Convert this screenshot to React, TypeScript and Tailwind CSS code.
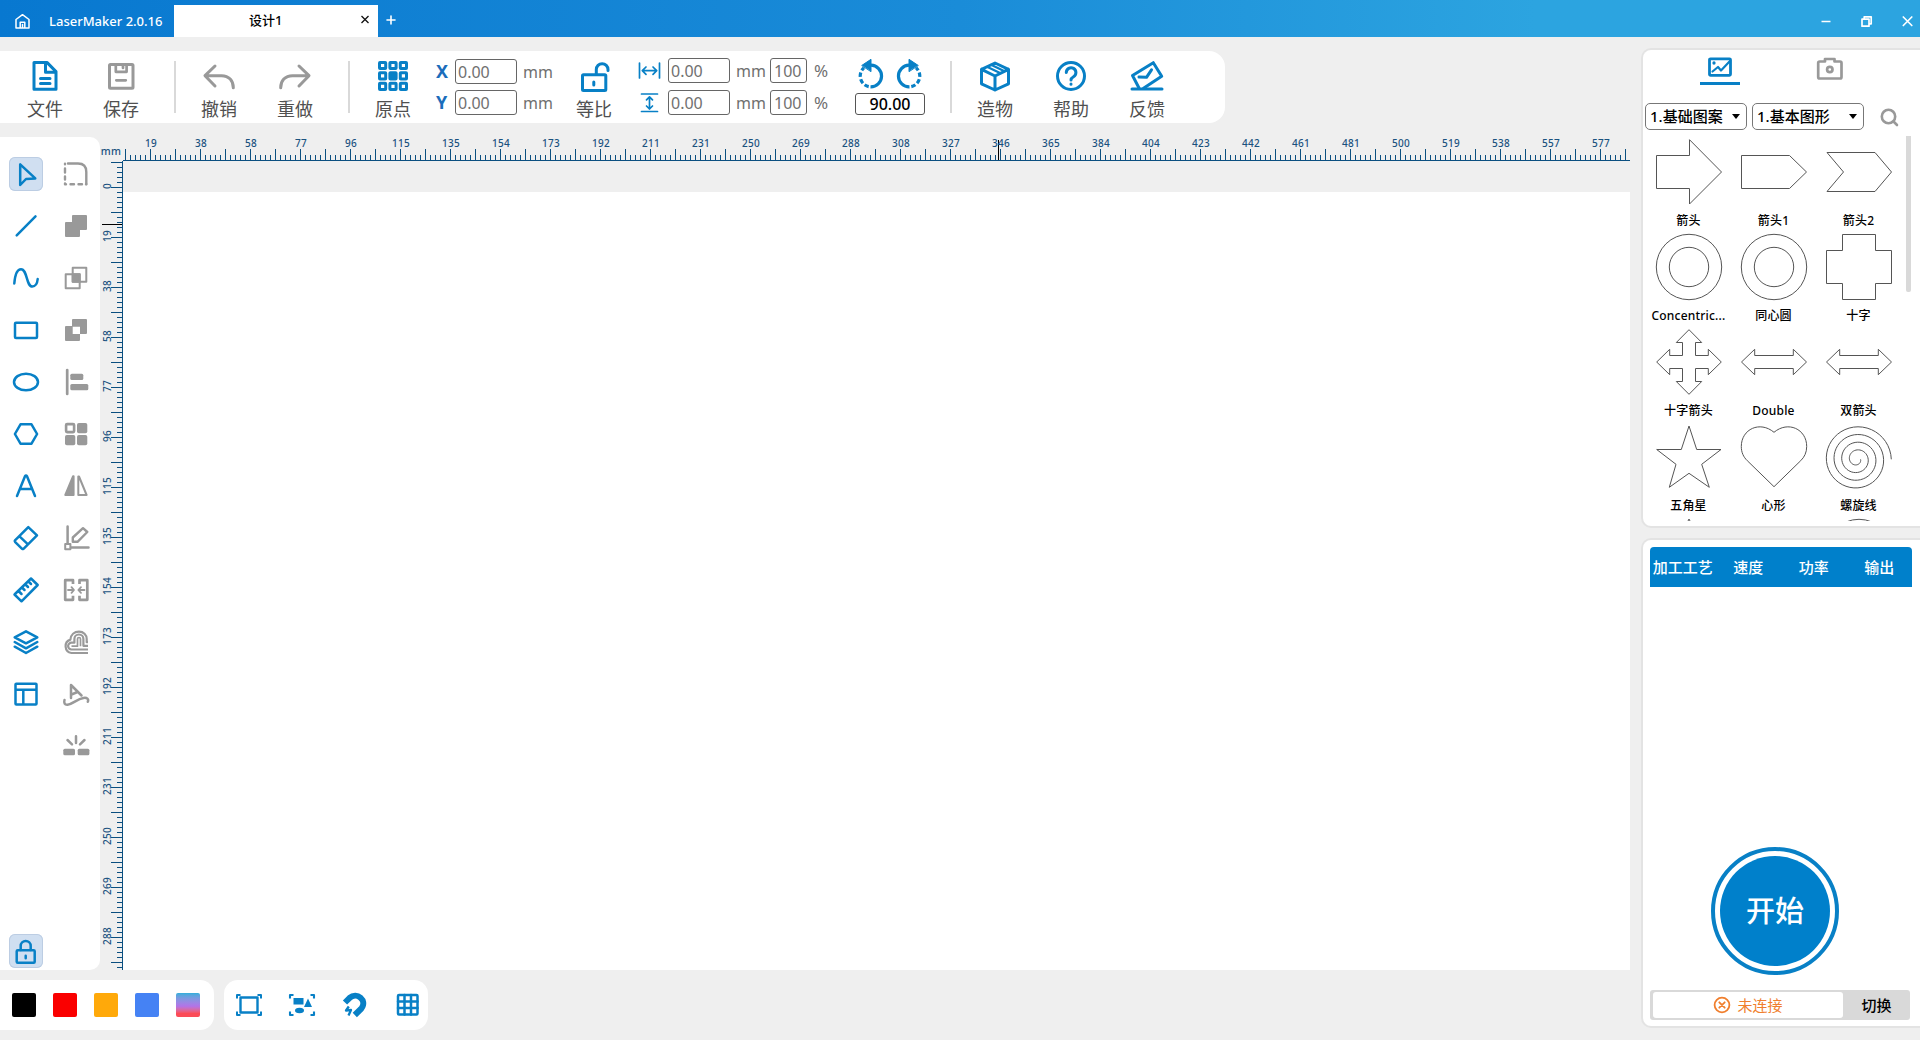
import type { ReactNode } from 'react';

const BLUE = '#0880c6';
const GRAY = '#999999';

const RULER_LABELS = [
  0, 19, 38, 58, 77, 96, 115, 135, 154, 173, 192, 211, 231, 250, 269, 288, 308, 327, 346, 365, 384, 404, 423, 442, 461,
  481, 500, 519, 538, 557, 577
];

function Icon({
  children,
  color = BLUE,
  width = 2,
  w = 34,
  h = 34
}: {
  children: ReactNode;
  color?: string;
  width?: number;
  w?: number;
  h?: number;
}) {
  return (
    <svg
      className="block shrink-0"
      width={w}
      height={h}
      viewBox={`0 0 ${w} ${h}`}
      fill="none"
      stroke={color}
      strokeWidth={width}
      strokeLinecap="round"
      strokeLinejoin="round"
    >
      {children}
    </svg>
  );
}

function TitleBar() {
  return (
    <header className="flex h-[37px] shrink-0 bg-linear-to-r from-[#0878d0] via-[#1a8cd8] via-50% to-[#2ca4e0] to-80% text-white">
      <div className="flex w-[174px] items-center pt-1.5 pl-3.5">
        <Icon w={17} h={17} color="#fff" width={1.5}>
          <path d="M2 6.5 8.5 1.7 15 6.5V15H2zM6.2 15V9.3h4.6V15M8.5 11.5V15" />
        </Icon>
        <span className="ml-[18px] text-[13px] font-medium whitespace-nowrap">LaserMaker 2.0.16</span>
      </div>
      <div className="mt-[5px] flex w-[204px] items-center bg-white text-black">
        <span className="ml-[75px] w-[109px] text-[13px] font-medium">设计1</span>
        <Icon w={14} h={14} color="#111" width={1.3}>
          <path d="m3.5 2 7 7m0-7-7 7" strokeLinecap="butt" />
        </Icon>
      </div>
      <div className="flex w-[26px] items-center justify-center pt-[3px]">
        <Icon w={10} h={10} color="#fff" width={1.6}>
          <path d="M1 5h8M5 1v8" />
        </Icon>
      </div>
      <div className="ml-auto flex items-center gap-7 pt-1.5 pr-1.5">
        <Icon w={13} h={13} color="#fff" width={1.5}>
          <path d="M2.5 6.5h9" strokeLinecap="butt" />
        </Icon>
        <Icon w={13} h={13} color="#fff" width={1.7}>
          <path d="M2 4.2h7v7H2zM4.2 4V1.8h7v7H9.5" />
        </Icon>
        <Icon w={13} h={13} color="#fff" width={1.7}>
          <path d="m2.3 2 8.5 8.5m0-8.5-8.5 8.5" />
        </Icon>
      </div>
    </header>
  );
}

function ToolbarButton({ label, children, muted = false }: { label: string; children: ReactNode; muted?: boolean }) {
  return (
    <button type="button" className="flex w-[76px] shrink-0 flex-col items-center pt-2">
      <Icon color={muted ? GRAY : BLUE} width={3}>
        {children}
      </Icon>
      <span className="mt-[3px] text-[18px] leading-[26px] text-[#505050]">{label}</span>
    </button>
  );
}

function Separator() {
  return <div className="mt-2.5 h-[52px] w-0.5 shrink-0 bg-[#d9d9d9]" />;
}

function Field({ value }: { value: string }) {
  return (
    <div className="flex h-[25px] w-[62px] items-center rounded-[3px] border border-[#666] pl-0.5 text-[16px] text-[#707070]">
      {value}
    </div>
  );
}

function ScaleRow({ icon }: { icon: ReactNode }) {
  return (
    <div className="flex h-[25px] items-center text-[16px] text-[#707070]">
      <div className="w-[31px]">{icon}</div>
      <Field value="0.00" />
      <span className="w-10 pl-1.5">mm</span>
      <div className="flex h-[25px] w-[37px] items-center rounded-[3px] border border-[#666] pl-[3px]">100</div>
      <span className="pl-[7px] text-[17px]">%</span>
    </div>
  );
}

function Toolbar() {
  const cells = [0, 1, 2, 3, 4, 5, 6, 7, 8];
  return (
    <div className="mt-3.5 flex h-[72px] w-[1225px] shrink-0 rounded-r-[16px] bg-white pl-[7px]">
      <ToolbarButton label="文件">
        <path d="M6 3.6h13.2l8.8 9V30.200H6z" />
        <path d="M17.500 4v9.200h10" />
        <path d="M12.500 19.600h9.500M12.500 24.600h9.500" />
      </ToolbarButton>
      <ToolbarButton label="保存" muted>
        <rect x="5.5" y="5.5" width="23.5" height="23.700" rx="1" />
        <path d="M11.800 6v6.800h10.800V6M12.300 21.3h9.500M19 7v2" strokeWidth="2.700" />
      </ToolbarButton>
      <div className="w-[15px]" />
      <Separator />
      <div className="w-[5px]" />
      <ToolbarButton label="撤销" muted>
        <path d="M13 7 3 16.7 13 27M3.5 16.7h16c7.500 0 11.800 5 11.800 12" />
      </ToolbarButton>
      <ToolbarButton label="重做" muted>
        <path d="M21 7 31 16.700 21 27M30.500 16.700h-16c-7.500 0-11.800 5-11.800 12" />
      </ToolbarButton>
      <div className="w-[15px]" />
      <Separator />
      <div className="w-[5px]" />
      <ToolbarButton label="原点">
        {cells.map((i) => (
          <rect
            key={i}
            x={3.5 + (i % 3) * 10.4}
            y={3.4 + Math.floor(i / 3) * 10.4}
            width="6.2"
            height="6.2"
            rx="0.5"
            fill={i === 4 ? BLUE : 'none'}
          />
        ))}
      </ToolbarButton>
      <div className="ml-[5px] flex w-[120px] flex-col gap-1.5 pt-2 text-[16px]">
        {['X', 'Y'].map((axis) => (
          <div key={axis} className="flex h-[25px] items-center">
            <span className="w-[19px] text-[18px] font-bold text-[#1b6dbb]">{axis}</span>
            <Field value="0.00" />
            <span className="pl-1.5 text-[#707070]">mm</span>
          </div>
        ))}
      </div>
      <ToolbarButton label="等比">
        <rect x="5.500" y="15.700" width="23.300" height="15.700" rx="1" />
        <path d="M19.300 15v-4.500a5.700 5.700 0 0 1 11.700 0v1M16.800 23v3" />
      </ToolbarButton>
      <div className="ml-[5px] flex w-[218px] flex-col gap-[7px] pt-[7px]">
        <ScaleRow
          icon={
            <Icon w={24} h={24} width={1.7}>
              <path d="M2.500 4v15M22.500 4v15M5.500 11.700h14M9 8l-3.700 3.700L9 15.400M16 8l3.700 3.700-3.700 3.700" />
            </Icon>
          }
        />
        <ScaleRow
          icon={
            <Icon w={24} h={24} width={1.700}>
              <path d="M4.500 3h16M4.500 20.500h16M12.500 6v12M9.500 8.800l3-3 3 3M9.500 15l3 3 3-3" />
            </Icon>
          }
        />
      </div>
      <div className="flex w-[70px] flex-col pt-[7px]">
        <div className="flex h-[35px] justify-between px-0.5">
          <Icon w={28} h={32} width={3.200}>
            <g strokeLinecap="butt">
              <path d="M14 7.200a10.800 10.800 0 1 1-.5 21.600" />
              <path d="M11.700 28.600a10.800 10.800 0 0 1-8.400-11.800 10.800 10.800 0 0 1 3.700-7" strokeDasharray="4.500 2.300" />
            </g>
            <path d="m5 7.300 9-6v12z" fill={BLUE} strokeWidth="1" />
          </Icon>
          <Icon w={28} h={32} width={3.200}>
            <g strokeLinecap="butt">
              <path d="M14 7.200a10.800 10.800 0 1 0 .5 21.600" />
              <path d="M16.300 28.600a10.800 10.800 0 0 0 8.400-11.800 10.800 10.800 0 0 0-3.700-7" strokeDasharray="4.500 2.300" />
            </g>
            <path d="m23 7.300-9-6v12z" fill={BLUE} strokeWidth="1" />
          </Icon>
        </div>
        <div className="flex h-[22px] items-center justify-center rounded-[3px] border border-[#555] text-[16px] font-medium text-black">
          90.00
        </div>
      </div>
      <div className="w-[25px]" />
      <Separator />
      <div className="w-[5px]" />
      <ToolbarButton label="造物">
        <path d="m17 4 13.500 6.300v14.500L17 31 3.500 24.800V10.300zM3.500 10.300 17 17l13.500-6.700M17 17v14" />
        <path d="m9.500 8 12.500 6M13 5.800l13 6.200" strokeWidth="2.200" />
      </ToolbarButton>
      <ToolbarButton label="帮助">
        <circle cx="17" cy="17" r="13.500" />
        <path d="M12.300 13.500a4.800 4.800 0 1 1 7.200 4.200c-1.700 1-2.500 1.800-2.500 3.300M17 25v.2" />
      </ToolbarButton>
      <ToolbarButton label="反馈">
        <path d="M9 29 2.500 16.500 23.300 3.700 31.700 17.300 13.500 29.200" />
        <path d="M2 30h30" />
        <path d="m9 18 7.500.3 5-7.500" />
      </ToolbarButton>
    </div>
  );
}

const DRAW_TOOLS: ReactNode[] = [
  <path d="M11.2 7.300v20.700l5.800-6 9.300-.6z" />,
  <path d="M7.700 26.400 26.500 7.400" />,
  <path d="M5.300 22.500C6 14 8.500 8.200 12 8.200c6.500 0 5 17.300 11.300 17.300 3.200 0 5-3.500 5.400-7.500" />,
  <rect x="6" y="9.700" width="22" height="15.300" rx="1" />,
  <ellipse cx="17" cy="17" rx="12" ry="8.300" />,
  <path d="M5.900 17 11.500 7.300h11L28.100 17l-5.600 9.700h-11z" />,
  <path d="M8 27 16 7.200q1-1.500 2 0L26 27M11.500 20h11" />,
  <path d="M19.300 6.100 28 14.300 14.500 27.800q-.7.500-1.400 0L6 20.800q-.6-.7 0-1.400zM10.500 15.300l8.500 8" />,
  <path d="m22 5.500 6.700 6.500-16.200 16.300L5.500 21.500zM9.500 18l3 3M13 14.500l2.500 2.500M16.500 11.500l2.500 2.500M19.500 8.500l2.500 2.500" />,
  <path d="m17 6.300 11.300 6-11.300 6-11.300-6zM5.700 17 17 23.300 28.300 17M5.700 21.700 17 28l11.300-6.300" />,
  <path d="M6.500 7.500q0-.8.800-.8h19.500q.7 0 .7.800v19.200q0 .8-.8.800H7.300q-.8 0-.8-.8zM6.500 12.700h21M14.300 12.700v14.600" />
];

const EDIT_TOOLS: ReactNode[] = [
  <>
    <path d="M9 6.500h10q8.300 0 8.300 8.500v12" strokeWidth="2.400" />
    <path d="M6 6.700v.6M6 11.500v4M6 19.500v3M6 26.500v.7h1M11.500 27.300h3.500M19.500 27.300h3.500M27 27.300h.3" strokeWidth="2.400" />
  </>,
  <path d="M13 7q0-1 1-1h13q1 0 1 1v13q0 1-1 1h-6v6q0 1-1 1H7q-1 0-1-1V14q0-1 1-1h6z" fill={GRAY} stroke="none" />,
  <>
    <rect x="13.700" y="6.700" width="13.600" height="14" />
    <rect x="6.700" y="13.300" width="14" height="14" />
    <path d="M13.700 13.300h7v7.400h-7z" fill={GRAY} />
  </>,
  <path
    d="M13 7q0-1 1-1h13q1 0 1 1v13q0 1-1 1h-6v6q0 1-1 1H7q-1 0-1-1V14q0-1 1-1h6zM13.700 13.700v7.300h7.300v-7.300z"
    fill={GRAY}
    fillRule="evenodd"
    stroke="none"
  />,
  <>
    <path d="M8.200 5v24" strokeWidth="2.700" />
    <rect x="11.300" y="8.700" width="13" height="6.300" rx="1.500" fill={GRAY} stroke="none" />
    <rect x="11.300" y="19" width="18" height="6.300" rx="1.500" fill={GRAY} stroke="none" />
  </>,
  <>
    <rect x="7.100" y="7.100" width="8" height="8" rx="1" strokeWidth="2.600" />
    <rect x="18" y="6" width="10.300" height="10.300" rx="1.800" fill={GRAY} stroke="none" />
    <rect x="6" y="18" width="10.300" height="10.300" rx="1.800" fill={GRAY} stroke="none" />
    <rect x="18" y="18" width="10.300" height="10.300" rx="1.800" fill={GRAY} stroke="none" />
  </>,
  <>
    <path d="M6.300 26 14 7.300h.600V26z" fill={GRAY} />
    <path d="M19.300 7.500V26h8.300L20 7.500z" />
  </>,
  <>
    <path d="M8.600 5.500v17M12 26.500h17.500" strokeWidth="2.500" />
    <rect x="6.200" y="23" width="5.200" height="5.200" />
    <path d="M24 7.200 28.300 11 18.500 20.800h-4.700v-4.300z" strokeWidth="2.400" />
  </>,
  <>
    <path d="M14 11V7.200H6.200v19.600H14v-4M20.500 11V7.200h7.800v19.600h-7.800v-4" strokeLinecap="butt" strokeWidth="2.700" />
    <path d="M9 17h5.500m-2-2.800L15 17l-2.500 2.800M25.500 17H20m2-2.800L19.300 17l2.700 2.800" strokeWidth="1.800" />
  </>,
  <g strokeWidth="2.200" strokeLinecap="butt">
    <path d="M29 28H12.500a6.900 6.900 0 0 1-1.100-13.400C11.800 9.800 15.300 6.600 20 6.600c4.500 0 7.700 3.300 7.700 7.400v3.200H29" />
    <path d="M29 24.500H12.500a3.400 3.400 0 0 1 0-6.800h2.900V14a4.500 4.500 0 0 1 9 0v6.800H29" />
    <path d="M12.500 21.200h6V14a1.500 1.500 0 0 1 3 0v7.200" strokeWidth="1.700" />
  </g>,
  <>
    <path d="M12 21V8L22.500 18.500M12.500 17.500l6-2.500" strokeWidth="2.500" />
    <path d="M5.500 23c-.8 3 .2 5 3 4.800C14 27 18 22 24.500 21c3.500-.6 5.500 1 4.300 3.800" strokeWidth="2.500" />
  </>,
  <>
    <rect x="4.300" y="19.700" width="11.700" height="6.600" rx="1.500" fill={GRAY} stroke="none" />
    <rect x="18.700" y="19.700" width="11.700" height="6.600" rx="1.500" fill={GRAY} stroke="none" />
    <path d="M17 7.300V14M8.500 11l4.500 4.300M25.500 11 21 15.300" strokeWidth="2.500" />
  </>
];

function SideTools() {
  return (
    <div className="mt-3.5 flex h-[833px] w-[100px] shrink-0 justify-start gap-4 rounded-r-[10px] bg-white pt-5 pb-0.5 pl-[9px]">
      <div className="flex flex-col gap-[18px]">
        {DRAW_TOOLS.map((icon, i) => (
          <button
            key={i}
            type="button"
            className={i === 0 ? 'size-[34px] rounded-md bg-[#d0dff1] inset-ring inset-ring-[#bccde3]' : 'size-[34px]'}
          >
            <Icon width={2.500}>{icon}</Icon>
          </button>
        ))}
        <button type="button" className="mt-auto size-[34px] rounded-md bg-[#d0dff1] inset-ring inset-ring-[#bccde3]">
          <Icon width={2.500}>
            <rect x="7.700" y="16.300" width="18" height="12.500" rx="1" />
            <path d="M11.700 16v-4a5 5 0 0 1 10 0v4M16.700 21.700v2.500" />
          </Icon>
        </button>
      </div>
      <div className="flex flex-col gap-[18px]">
        {EDIT_TOOLS.map((icon, i) => (
          <button key={i} type="button" className="size-[34px]">
            <Icon color={GRAY}>{icon}</Icon>
          </button>
        ))}
      </div>
    </div>
  );
}

function tickPath(count: number, start: number, vertical: boolean) {
  let d = '';
  for (let i = 0; i < count; i++) {
    const p = start + i * 5 + 0.5;
    const len = i % 5 === 0 ? 11 : 5;
    d += vertical ? `M22 ${p}h${-len}` : `M${p} 37v${-len}`;
  }
  return d;
}

function Workspace() {
  return (
    <div className="flex w-[1530px] flex-col">
      <svg className="block shrink-0" width="1530" height="38" viewBox="0 0 1530 38">
        <path d={`${tickPath(301, 25, false)}M23 37.500H1530`} stroke="#0b4f80" fill="none" />
        <path d="M898.500 17v20" stroke="#000" />
        <g fill="#1a527f" fontSize="10" fontWeight="500" letterSpacing="0.2" textAnchor="middle">
          <text x="11" y="32" fontSize="10.500">
            mm
          </text>
          {RULER_LABELS.slice(1).map((label, i) => (
            <text key={label} x={51 + i * 50} y="24">
              {label}
            </text>
          ))}
        </g>
      </svg>
      <div className="flex h-[809px]">
        <svg className="block shrink-0" width="23" height="809" viewBox="0 0 23 809">
          <path d={`${tickPath(162, 1, true)}M22.500 0V809`} stroke="#0b4f80" fill="none" />
          <path d="M2 63.500h20" stroke="#000" />
          <g fill="#1a527f" fontSize="10" fontWeight="500" letterSpacing="0.2" textAnchor="middle">
            {RULER_LABELS.slice(0, 16).map((label, i) => (
              <text key={label} transform={`translate(10.500 ${25 + i * 50}) rotate(-90)`}>
                {label}
              </text>
            ))}
          </g>
        </svg>
        <div className="mt-[31px] flex-1 bg-white" />
      </div>
    </div>
  );
}

function BottomBar() {
  return (
    <div className="mt-2.5 flex h-[50px] gap-2.5">
      <div className="flex w-[214px] items-center gap-[17px] rounded-r-[14px] bg-white pl-3">
        <div className="size-6 rounded-xs bg-black" />
        <div className="size-6 rounded-xs bg-[#fa0000]" />
        <div className="size-6 rounded-xs bg-[#ffa90a]" />
        <div className="size-6 rounded-xs bg-[#4582f4]" />
        <div className="size-6 rounded-xs bg-linear-to-b from-[#2eaedb] via-[#b273e8] via-55% to-[#fb4b57] to-85%" />
      </div>
      <div className="flex w-[204px] items-center gap-[25px] rounded-[14px] bg-white pl-[11px]">
        <Icon w={28} h={28} width={2.400}>
          <rect x="5.500" y="6.500" width="17" height="15" />
          <path d="M2 7.500V4h3.500M22.500 4H26v3.500M26 20.500V24h-3.500M5.500 24H2v-3.500" strokeWidth="2" strokeLinecap="butt" />
        </Icon>
        <Icon w={28} h={28} width={2.100}>
          <path d="M2 7.500V4h3.500M22.500 4H26v3.500M26 20.500V24h-3.500M5.500 24H2v-3.500" strokeLinecap="butt" />
          <g fill={BLUE} stroke="none">
            <path d="M5.500 7h10v6.500h-10zM20 7.500l4 8.500h-8z" />
            <ellipse cx="11.500" cy="19.500" rx="4.500" ry="2.800" />
          </g>
        </Icon>
        <Icon w={28} h={28} width={6}>
          <path d="m4 11.500 4.700-4.700c7-6.300 18 2.500 11.700 10.700L13.800 24" strokeLinecap="butt" />
          <path d="M7.800 15.500 5 19.500l5-.500-2.500 5.500" strokeWidth="2.300" strokeLinecap="butt" />
        </Icon>
        <Icon w={28} h={28} width={2.500}>
          <rect x="4" y="4" width="19.500" height="19.500" rx="1" />
          <path d="M10.500 4v19.500M17 4v19.500M4 10.500h19.500M4 17h19.500" />
        </Icon>
      </div>
    </div>
  );
}

function spiralPath() {
  const points: string[] = [];
  for (let a = 0; a <= 360 * 4; a += 8) {
    const r = 34.4 - (a / 360) * 7.7;
    const rad = (a * Math.PI) / 180;
    points.push(`${(31.9 + r * Math.cos(rad)).toFixed(2)} ${(36.3 - r * Math.sin(rad)).toFixed(2)}`);
  }
  return `M${points.join('L')}`;
}

const rings = (
  <>
    <circle cx="34" cy="34" r="32.700" />
    <circle cx="34" cy="34" r="19.700" />
  </>
);
const doubleArrow = <path d="M1.500 34 14.700 21.300v6.200h38.600v-6.200L66.500 34 53.300 46.700v-6.200h-38.600v6.200z" />;

const SHAPES: { name: string; drawing: ReactNode }[] = [
  { name: '箭头', drawing: <path d="M1.500 17.500h33V1.700L66.500 34 34.500 66V50.500h-33z" /> },
  { name: '箭头1', drawing: <path d="M1.500 17.500h48L66.500 34l-17 16.500h-48z" /> },
  { name: '箭头2', drawing: <path d="M2 14.500h48L66.500 34 50 53.500H2L18.500 34z" /> },
  { name: 'Concentric...', drawing: rings },
  { name: '同心圆', drawing: rings },
  { name: '十字', drawing: <path d="M17.500 1.500h33v16h16v33h-16v16h-33v-16h-16v-33h16z" /> },
  {
    name: '十字箭头',
    drawing: (
      <path d="m34 1.700 12.700 12.800h-6.200v13h12.800v-6.200L66.300 34 53.300 46.700v-6.200H40.500v13h6.200L34 66.300 21.300 53.500h6.200v-13H14.700v6.200L1.700 34l13-12.700v6.200h12.800v-13h-6.200z" />
    )
  },
  { name: 'Double', drawing: doubleArrow },
  { name: '双箭头', drawing: doubleArrow },
  {
    name: '五角星',
    drawing: (
      <path d="m34 3 7.700 23.500H66L46.700 41.300l7.600 23L34 50.300l-19.700 14 6.700-23L1.700 26.500h24.600z" />
    )
  },
  {
    name: '心形',
    drawing: <path d="M34 9.300C20 -2.500 1.300 6 1.300 23.500c0 6 2.200 10.500 6 14.200L34 63.700l26.700-26c3.800-3.700 6-8.200 6-14.200C66.700 6 48 -2.500 34 9.300z" />
  },
  { name: '螺旋线', drawing: <path d={spiralPath()} /> },
  { name: '', drawing: <path d="m34 1 32 64H2z" /> },
  { name: ' ', drawing: null },
  { name: '  ', drawing: <circle cx="34" cy="34" r="32.700" /> }
];

function Dropdown({ label, className }: { label: string; className: string }) {
  return (
    <div className={`flex h-[27px] items-center justify-between rounded-[5px] border border-[#777] pr-1.5 pl-1 text-[15px] font-medium text-black ${className}`}>
      {label}
      <svg width="8" height="5" viewBox="0 0 8 5">
        <path d="M0 0h8L4 5z" />
      </svg>
    </div>
  );
}

function ShapeLibrary() {
  return (
    <section className="flex h-[480px] flex-col overflow-hidden rounded-l-[10px] border-2 border-r-0 border-[#e3e3e3] bg-white">
      <div className="flex h-[53px] pl-[57px]">
        <div className="flex h-[35px] w-10 flex-col items-center border-b-3 border-[#0880c6] pt-1.5">
          <Icon w={26} h={22} width={2.800}>
            <rect x="2.500" y="2.800" width="21" height="16.500" rx="1" />
            <path d="m5.500 15.500 5.500-4.500 3 3.500 8.500-9" strokeWidth="2.200" />
            <circle cx="7" cy="7" r=".9" strokeWidth="1.500" />
          </Icon>
        </div>
        <div className="ml-[76px] pt-1.5">
          <Icon w={28} h={26} width={2.700} color={GRAY}>
            <path d="M9 5.500V3h9.500v2.500H24q1.500 0 1.500 1.500v14q0 1.500-1.500 1.500H3.700q-1.500 0-1.500-1.500V7q0-1.500 1.500-1.500z" />
            <circle cx="13.800" cy="13.500" r="2.700" />
          </Icon>
        </div>
      </div>
      <div className="flex items-center gap-[5px] pl-0.5">
        <Dropdown label="1.基础图案" className="w-[102px]" />
        <Dropdown label="1.基本图形" className="w-[112px]" />
        <div className="pl-[11px]">
          <Icon w={20} h={20} width={2.600} color={GRAY}>
            <circle cx="8.500" cy="9.500" r="6.700" />
            <path d="m13.500 14.500 3.500 3.500" />
          </Icon>
        </div>
      </div>
      <div className="mt-1.5 flex h-[385px] overflow-hidden">
        <div className="mt-0.5 grid h-[475px] w-[258px] shrink-0 grid-cols-3 grid-rows-5 pl-[3px]">
          {SHAPES.map((shape) => (
            <div key={shape.name} className="flex h-[95px] w-[85px] flex-col items-center">
              <svg className="block shrink-0" width="68" height="68" viewBox="0 0 68 68" fill="none" stroke="#555">
                {shape.drawing}
              </svg>
              <span className="mt-[5px] text-[12px] leading-5 font-medium tracking-[0.2px] text-black">{shape.name}</span>
            </div>
          ))}
        </div>
        <div className="ml-[5px] h-[156px] w-[5px] rounded-b-xs bg-[#d9d9d9]" />
      </div>
    </section>
  );
}

function JobPanel() {
  return (
    <section className="mt-2.5 flex h-[490px] flex-col rounded-l-[10px] border-2 border-r-0 border-[#e3e3e3] bg-white pt-[7px] pl-[7px]">
      <div className="grid h-10 w-[262px] grid-cols-4 items-center rounded-t bg-[#0080cb] text-center text-[15px] font-medium text-white">
        <span>加工工艺</span>
        <span>速度</span>
        <span>功率</span>
        <span>输出</span>
      </div>
      <button
        type="button"
        className="mt-[260px] ml-[61px] size-32 rounded-full border-4 border-[#0880c6] p-[5px]"
      >
        <span className="flex size-full items-center justify-center rounded-full bg-[#0080cb] text-[29px] font-medium text-white">
          开始
        </span>
      </button>
      <div className="mt-[15px] flex h-[30px] w-[260px] rounded-[3px] bg-[#d9d9d9] py-0.5 pl-[3px] text-[15px]">
        <div className="flex w-[190px] items-center justify-center gap-1.5 rounded-[3px] bg-white text-[#f07f2e]">
          <Icon w={18} h={18} color="#f07f2e" width={1.800}>
            <circle cx="9" cy="9" r="7.400" />
            <path d="m6.300 6.300 5.400 5.400m0-5.400-5.400 5.400" />
          </Icon>
          未连接
        </div>
        <div className="flex flex-1 items-center justify-center font-medium text-black">切换</div>
      </div>
    </section>
  );
}

export default function App() {
  return (
    <div className="flex h-[1040px] w-[1920px] flex-col overflow-hidden bg-[#efefef] font-['Noto_Sans','Noto_Sans_CJK_SC',sans-serif]">
      <TitleBar />
      <div className="flex min-h-0 flex-1">
        <main className="flex w-[1641px] shrink-0 flex-col">
          <Toolbar />
          <div className="flex h-[847px] shrink-0">
            <SideTools />
            <Workspace />
          </div>
          <BottomBar />
        </main>
        <aside className="flex w-[279px] flex-col pt-[11px]">
          <ShapeLibrary />
          <JobPanel />
        </aside>
      </div>
    </div>
  );
}
